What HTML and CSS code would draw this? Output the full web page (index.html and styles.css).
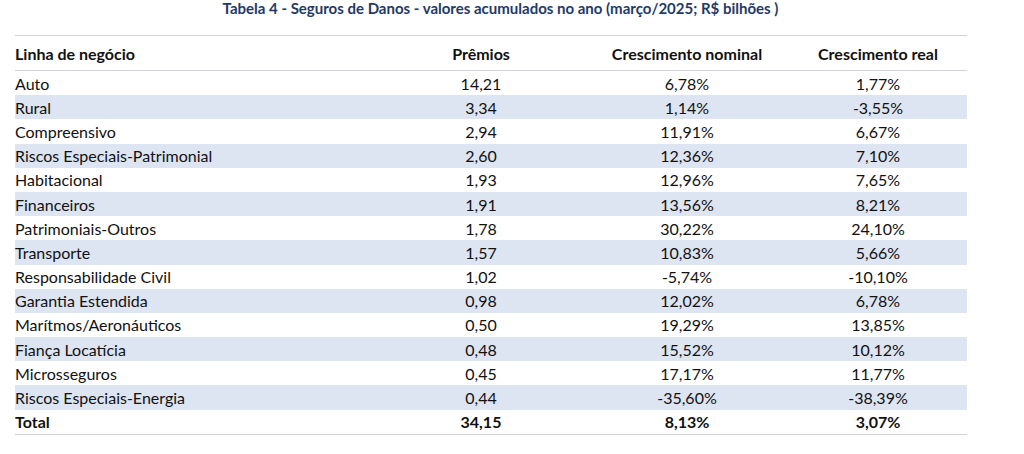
FILE: index.html
```html
<!DOCTYPE html>
<html lang="pt-BR">
<head>
<meta charset="utf-8">
<title>Tabela 4</title>
<link rel="stylesheet" href="styles.css">
</head>
<body>
<div class="page">
  <h1 class="title">Tabela 4 - Seguros de Danos - valores acumulados no ano (março/2025; R$ bilhões )</h1>
  <table class="data">
    <thead>
      <tr><th class="name">Linha de negócio</th><th class="c1">Prêmios</th><th class="c2">Crescimento nominal</th><th class="c3">Crescimento real</th></tr>
    </thead>
    <tbody>
      <tr><td class="name">Auto</td><td>14,21</td><td>6,78%</td><td>1,77%</td></tr>
      <tr><td class="name">Rural</td><td>3,34</td><td>1,14%</td><td>-3,55%</td></tr>
      <tr><td class="name">Compreensivo</td><td>2,94</td><td>11,91%</td><td>6,67%</td></tr>
      <tr><td class="name">Riscos Especiais-Patrimonial</td><td>2,60</td><td>12,36%</td><td>7,10%</td></tr>
      <tr><td class="name">Habitacional</td><td>1,93</td><td>12,96%</td><td>7,65%</td></tr>
      <tr><td class="name">Financeiros</td><td>1,91</td><td>13,56%</td><td>8,21%</td></tr>
      <tr><td class="name">Patrimoniais-Outros</td><td>1,78</td><td>30,22%</td><td>24,10%</td></tr>
      <tr><td class="name">Transporte</td><td>1,57</td><td>10,83%</td><td>5,66%</td></tr>
      <tr><td class="name">Responsabilidade Civil</td><td>1,02</td><td>-5,74%</td><td>-10,10%</td></tr>
      <tr><td class="name">Garantia Estendida</td><td>0,98</td><td>12,02%</td><td>6,78%</td></tr>
      <tr><td class="name">Marítmos/Aeronáuticos</td><td>0,50</td><td>19,29%</td><td>13,85%</td></tr>
      <tr><td class="name">Fiança Locatícia</td><td>0,48</td><td>15,52%</td><td>10,12%</td></tr>
      <tr><td class="name">Microsseguros</td><td>0,45</td><td>17,17%</td><td>11,77%</td></tr>
      <tr><td class="name">Riscos Especiais-Energia</td><td>0,44</td><td>-35,60%</td><td>-38,39%</td></tr>
      <tr class="total"><td class="name">Total</td><td>34,15</td><td>8,13%</td><td>3,07%</td></tr>
    </tbody>
  </table>
</div>
</body>
</html>
```
FILE: styles.css
```css
html, body {
  margin: 0;
  padding: 0;
  background: #ffffff;
}
body {
  font-family: Lato, "Open Sans", "Liberation Sans", sans-serif;
  color: #111111;
}
.page {
  width: 1024px;
  height: 454px;
  overflow: hidden;
  padding: 0 0 0 15px;
  box-sizing: border-box;
}
.title {
  margin: 0;
  width: 952px;
  height: 35px;
  padding-top: 0;
  padding-left: 19px;
  box-sizing: border-box;
  text-align: center;
  font-size: 15px;
  line-height: 17px;
  font-weight: 700;
  color: #1f3a68;
}
.data {
  width: 952px;
  border-collapse: collapse;
  table-layout: fixed;
  font-size: 16px;
}
.data th, .data td {
  padding: 0;
  text-align: center;
  font-weight: 400;
  white-space: nowrap;
}
.data th {
  font-weight: 700;
  height: 34px;
  border-top: 1px solid #cfd3d8;
  border-bottom: 1px solid #cfd3d8;
}
.data td {
  height: 24.2px;
}
.data .name {
  text-align: left;
  width: 362px;
}
.data .c1 { width: 208px; }
.data .c2 { width: 204px; }
.data .c3 { width: 178px; }
.data tbody tr:nth-child(even) td {
  background: #dde4f2;
}
.data tr.total td {
  font-weight: 700;
  border-bottom: 1px solid #cfd3d8;
}
```
